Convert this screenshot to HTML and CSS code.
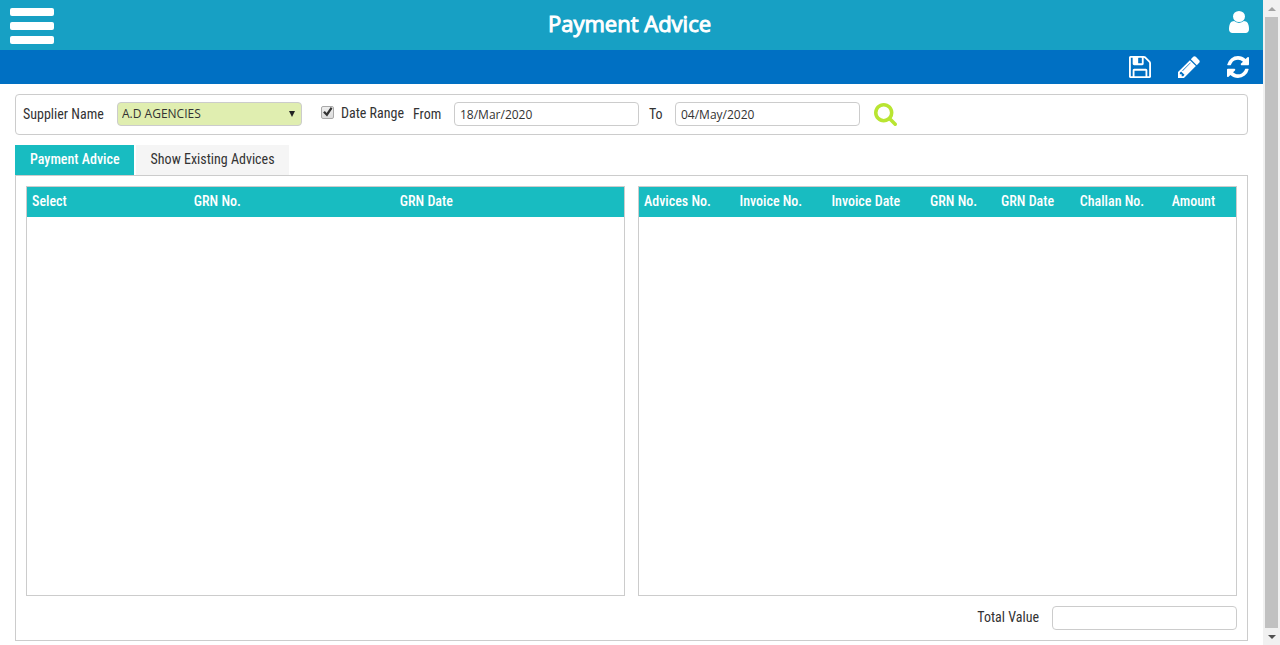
FILE: index.html
```html
<!DOCTYPE html>
<html lang="en">
<head>
<meta charset="utf-8">
<title>Payment Advice</title>
<link rel="stylesheet" href="styles.css">
</head>
<body>
<div class="page">
  <header class="header">
    <button class="menu" type="button" aria-label="Menu"><span class="menu-bar"></span><span class="menu-bar"></span><span class="menu-bar"></span></button>
    <h1 class="title">Payment Advice</h1>
    <button class="icon-button" type="button" aria-label="User">
      <svg class="icon-user" viewBox="0 128 1280 1536" preserveAspectRatio="none"><path d="M1280 1399q0 109-62.500 187t-150.500 78h-854q-88 0-150.500-78t-62.500-187q0-85 8.500-160.500t31.500-152 58.500-131 94-89 134.500-34.500q131 128 313 128t313-128q76 0 134.500 34.500t94 89 58.500 131 31.500 152 8.500 160.500zM1024 512q0 159-112.500 271.500t-271.500 112.500-271.500-112.500-112.500-271.500 112.500-271.500 271.500-112.500 271.500 112.500 112.500 271.500z"/></svg>
    </button>
  </header>
  <nav class="toolbar" aria-label="Actions">
    <button class="icon-button" type="button" aria-label="Save">
      <svg class="icon" viewBox="0 128 1536 1536"><path d="M384 1536h768v-384h-768v384zM1280 1536h128v-896q0-14-10-38.500t-20-34.500l-281-281q-10-10-34-20t-39-10v416q0 40-28 68t-68 28h-576q-40 0-68-28t-28-68v-416h-128v1280h128v-416q0-40 28-68t68-28h832q40 0 68 28t28 68v416zM896 608v-320q0-13-9.500-22.500t-22.500-9.500h-192q-13 0-22.500 9.500t-9.500 22.500v320q0 13 9.500 22.500t22.500 9.500h192q13 0 22.500-9.500t9.500-22.500zM1536 640v928q0 40-28 68t-68 28h-1344q-40 0-68-28t-28-68v-1344q0-40 28-68t68-28h928q40 0 88 20t76 48l280 280q28 28 48 76t20 88z"/></svg>
    </button>
    <button class="icon-button" type="button" aria-label="Edit">
      <svg class="icon" viewBox="0 128 1536 1536"><path d="M363 1536l91-91-235-235-91 91v107h128v128h107zM886 608q0-22-22-22-10 0-17 7l-542 542q-7 7-7 17 0 22 22 22 10 0 17-7l542-542q7-7 7-17zM832 416l416 416-832 832h-416v-416zM1515 512q0 53-37 90l-166 166-416-416 166-165q36-38 90-38 53 0 91 38l235 234q37 39 37 91z"/></svg>
    </button>
    <button class="icon-button" type="button" aria-label="Refresh">
      <svg class="icon" viewBox="0 128 1536 1536"><path d="M1511 1056q0 5-1 7-64 268-268 434.500t-478 166.500q-146 0-282.500-55t-243.500-157l-129 129q-19 19-45 19t-45-19-19-45v-448q0-26 19-45t45-19h448q26 0 45 19t19 45-19 45l-137 137q71 66 161 102t187 36q134 0 250-65t186-179q11-17 53-117 8-23 30-23h192q13 0 22.500 9.500t9.500 22.500zM1536 256v448q0 26-19 45t-45 19h-448q-26 0-45-19t-19-45 19-45l138-138q-148-137-349-137-134 0-250 65t-186 179q-11 17-53 117-8 23-30 23h-199q-13 0-22.500-9.500t-9.500-22.500v-7q65-268 270-434.500t480-166.500q146 0 284 55.500t245 156.500l130-129q19-19 45-19t45 19 19 45z"/></svg>
    </button>
  </nav>
  <main class="content">
    <form class="filters">
      <label class="supplier-label" for="supplier">Supplier Name</label>
      <span class="select-wrap"><select class="field select" id="supplier"><option>A.D AGENCIES</option></select></span>
      <input class="checkbox" type="checkbox" id="range" checked>
      <label class="range-label" for="range">Date Range</label>
      <label class="from-label" for="from">From</label>
      <input class="field" type="text" id="from" value="18/Mar/2020">
      <label class="to-label" for="to">To</label>
      <input class="field" type="text" id="to" value="04/May/2020">
      <button class="search" type="button" aria-label="Search">
        <svg class="icon-search" viewBox="0 128 1664 1664"><path d="M1152 832q0-185-131.500-316.500t-316.500-131.500-316.500 131.500-131.500 316.500 131.500 316.500 316.500 131.500 316.500-131.500 131.500-316.500zM1664 1664q0 52-38 90t-90 38q-54 0-90-38l-343-342q-179 124-399 124-143 0-273.500-55.500t-225-150-150-225-55.500-273.500 55.500-273.500 150-225 225-150 273.500-55.500 273.500 55.500 225 150 150 225 55.500 273.500q0 220-124 399l343 343q37 37 37 90z"/></svg>
      </button>
    </form>
    <div class="tabs" role="tablist">
      <button class="tab tab-active" type="button" role="tab" aria-selected="true">Payment Advice</button>
      <button class="tab" type="button" role="tab" aria-selected="false">Show Existing Advices</button>
    </div>
    <section class="panel">
      <div class="grids">
        <div class="grid">
          <table class="table">
            <colgroup><col class="w-select"><col class="w-number"><col></colgroup>
            <thead><tr><th>Select</th><th>GRN No.</th><th>GRN Date</th></tr></thead>
          </table>
        </div>
        <div class="grid">
          <table class="table">
            <colgroup><col class="w-16"><col class="w-15"><col class="w-17"><col class="w-12"><col class="w-13"><col class="w-15"><col></colgroup>
            <thead><tr><th>Advices No.</th><th>Invoice No.</th><th>Invoice Date</th><th>GRN No.</th><th>GRN Date</th><th>Challan No.</th><th>Amount</th></tr></thead>
          </table>
        </div>
      </div>
      <div class="total">
        <label class="total-label" for="total">Total Value</label>
        <input class="field" type="text" id="total">
      </div>
    </section>
  </main>
</div>
<div class="scrollbar" aria-hidden="true">
  <span class="scroll-arrow scroll-up"></span>
  <span class="scroll-thumb"></span>
  <span class="scroll-arrow scroll-down"></span>
</div>
</body>
</html>
```
FILE: styles.css
```css
* { box-sizing: border-box; }

body {
  margin: 0;
  display: flex;
  min-height: 100vh;
  background: #fff;
  color: #333;
  font: 14px/20px "Roboto Condensed", "Liberation Sans Narrow", Roboto, sans-serif;
}

button {
  border: 0;
  padding: 0;
  background: none;
  color: inherit;
  font: inherit;
  cursor: pointer;
}

svg { display: block; }

.page {
  flex: 1;
  min-width: 0;
  display: flex;
  flex-direction: column;
}

.header {
  height: 50px;
  padding: 0 14px 0 10px;
  display: grid;
  grid-template-columns: 44px 1fr 44px;
  align-items: center;
  background: #17a0c4;
  color: #fff;
}

.menu {
  display: flex;
  flex-direction: column;
  gap: 6px;
  padding-top: 2px;
}

.menu-bar {
  height: 8px;
  border-radius: 2px;
  background: #fff;
}

.title {
  margin: 0;
  padding-bottom: 4px;
  text-align: center;
  font: 400 22px/46px "Open Sans", sans-serif;
  -webkit-text-stroke: 1px #fff;
}

.icon-button { justify-self: end; }

.icon-user {
  width: 20px;
  height: 22px;
  margin-bottom: 6px;
  fill: #fff;
}

.toolbar {
  height: 34px;
  padding-right: 14px;
  display: flex;
  align-items: center;
  justify-content: flex-end;
  gap: 27px;
  background: #0070c3;
}

.icon {
  width: 22px;
  height: 22px;
  fill: #fff;
}

.content {
  flex: 1;
  display: flex;
  flex-direction: column;
  padding: 10px 15px 4px;
}

.filters {
  height: 41px;
  padding: 0 7px 1px;
  display: flex;
  align-items: center;
  border: 1px solid #ccc;
  border-radius: 4px;
}

.supplier-label { width: 94px; }
.range-label { width: 72px; padding-bottom: 2px; }
.from-label { width: 41px; }
.to-label { width: 36px; padding-left: 10px; }

.field {
  width: 185px;
  height: 24px;
  padding: 0 5px;
  border: 1px solid #ccc;
  border-radius: 4px;
  background: #fff;
  color: #333;
  font: 12px/20px "Open Sans", sans-serif;
}

.select-wrap {
  position: relative;
  display: flex;
}

.select-wrap::after {
  content: "";
  position: absolute;
  top: 9px;
  right: 7px;
  border: solid transparent;
  border-width: 6px 3px 0;
  border-top-color: #222;
  pointer-events: none;
}

.select {
  appearance: none;
  padding: 0 4px;
  background: #e0eeb0;
}

.checkbox {
  appearance: none;
  width: 13px;
  height: 13px;
  margin: 0 7px 4px 19px;
  border: 1px solid #a9a9a9;
  border-radius: 2px;
  background: linear-gradient(#eee, #dcdcdc);
}

.checkbox:checked::before {
  content: "";
  display: block;
  height: 11px;
  background: #333;
  clip-path: polygon(10% 55%, 26% 42%, 42% 58%, 80% 5%, 95% 18%, 46% 92%);
}

.search { margin-left: 14px; }

.icon-search {
  width: 23px;
  height: 23px;
  fill: #b9e532;
}

.tabs {
  display: flex;
  gap: 2px;
  margin-top: 10px;
}

.tab {
  height: 30px;
  padding: 0 14px 2px 15px;
  background: #f5f5f5;
}

.tab-active {
  background: #18bcc1;
  color: #fff;
  font-weight: 500;
}

.panel {
  flex: 1;
  display: flex;
  flex-direction: column;
  padding: 10px;
  border: 1px solid #ccc;
}

.grids {
  flex: 1;
  min-height: 300px;
  display: grid;
  grid-template-columns: 1fr 1fr;
  gap: 13px;
}

.grid { border: 1px solid #ccc; }

.table {
  width: 100%;
  table-layout: fixed;
  border-collapse: collapse;
  background: #18bcc1;
  color: #fff;
}

.table th {
  height: 30px;
  padding: 0 0 2px 5px;
  text-align: left;
  font-weight: 500;
  white-space: nowrap;
}

.w-select { width: 27.1%; }
.w-number { width: 34.5%; }
.w-12 { width: 11.9%; }
.w-13 { width: 13.2%; }
.w-15 { width: 15.4%; }
.w-16 { width: 16%; }
.w-17 { width: 16.5%; }

.total {
  display: flex;
  justify-content: flex-end;
  align-items: center;
  gap: 13px;
  margin-top: 10px;
}

.total-label { padding-bottom: 3px; }

.scrollbar {
  width: 17px;
  display: flex;
  flex-direction: column;
  align-items: center;
  background: #f1f1f1;
}

.scroll-arrow {
  height: 17px;
  display: flex;
  align-items: center;
}

.scroll-arrow::before {
  content: "";
  border: solid transparent;
}

.scroll-up::before {
  border-width: 0 4px 4px;
  border-bottom-color: #a3a3a3;
}

.scroll-down::before {
  border-width: 4px 4px 0;
  border-top-color: #505050;
}

.scroll-thumb {
  flex: 1;
  width: 13px;
  background: #c1c1c1;
}
```
